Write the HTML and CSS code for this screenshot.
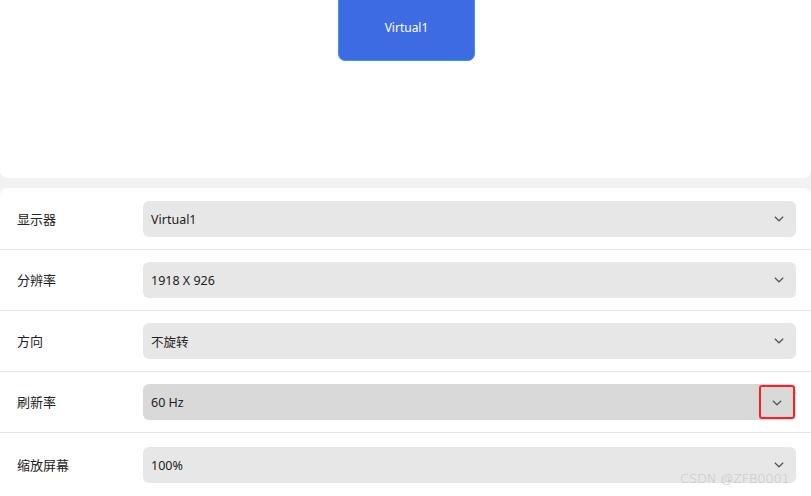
FILE: index.html
```html
<!DOCTYPE html>
<html lang="zh">
<head>
<meta charset="utf-8">
<title>显示器</title>
<link rel="stylesheet" href="styles.css">
</head>
<body>
<div class="page">
  <section class="canvas">
    <div class="monitor">Virtual1</div>
  </section>
  <section class="panel">
    <div class="row">
      <div class="label">显示器</div>
      <div class="select"><span>Virtual1</span><svg class="chev" width="10" height="6" viewBox="0 0 10 6"><path d="M0.8 0.8 L5 4.8 L9.2 0.8" fill="none" stroke="#555" stroke-width="1.2"/></svg></div>
    </div>
    <div class="row">
      <div class="label">分辨率</div>
      <div class="select"><span>1918 X 926</span><svg class="chev" width="10" height="6" viewBox="0 0 10 6"><path d="M0.8 0.8 L5 4.8 L9.2 0.8" fill="none" stroke="#555" stroke-width="1.2"/></svg></div>
    </div>
    <div class="row">
      <div class="label">方向</div>
      <div class="select"><span>不旋转</span><svg class="chev" width="10" height="6" viewBox="0 0 10 6"><path d="M0.8 0.8 L5 4.8 L9.2 0.8" fill="none" stroke="#555" stroke-width="1.2"/></svg></div>
    </div>
    <div class="row">
      <div class="label">刷新率</div>
      <div class="select select-active"><span>60 Hz</span><div class="highlight"><svg class="chev" width="10" height="6" viewBox="0 0 10 6"><path d="M0.8 0.8 L5 4.8 L9.2 0.8" fill="none" stroke="#555" stroke-width="1.2"/></svg></div></div>
    </div>
    <div class="row row-last">
      <div class="label">缩放屏幕</div>
      <div class="select"><span>100%</span><svg class="chev" width="10" height="6" viewBox="0 0 10 6"><path d="M0.8 0.8 L5 4.8 L9.2 0.8" fill="none" stroke="#555" stroke-width="1.2"/></svg></div>
    </div>
  </section>
  <div class="watermark">CSDN @ZFB0001</div>
</div>
</body>
</html>
```

FILE: styles.css
```css
* { box-sizing: border-box; }
html, body {
  margin: 0;
  padding: 0;
  background: #f2f2f2;
  font-family: "Noto Sans", "Noto Sans CJK SC", sans-serif;
  color: #222;
}
.page {
  position: relative;
  width: 811px;
  height: 496px;
  overflow: hidden;
}
.canvas {
  position: relative;
  height: 178px;
  background: #fff;
  border-radius: 0 0 8px 8px;
}
.monitor {
  position: absolute;
  left: 338px;
  top: -8px;
  width: 137px;
  height: 69px;
  background: #3d6be3;
  border: 1px solid #3a9bd6;
  border-radius: 7px;
  color: #fff;
  font-size: 12px;
  display: flex;
  align-items: center;
  justify-content: center;
  padding-top: 1px;
}
.panel {
  margin-top: 10px;
  padding-top: 1px;
  background: #fff;
  border-radius: 8px 8px 0 0;
  height: 308px;
}
.row {
  display: flex;
  align-items: center;
  padding: 12px 15px 12px 17px;
  border-bottom: 1px solid #e6e6e6;
}
.row-last {
  padding-top: 14px;
  border-bottom: none;
}
.label {
  width: 126px;
  font-size: 13px;
  line-height: 18px;
}
.select {
  flex: 1;
  height: 36px;
  background: #e7e7e7;
  border-radius: 6px;
  display: flex;
  align-items: center;
  justify-content: space-between;
  padding: 0 12px 0 8px;
  font-size: 12.5px;
}
.select-active {
  background: #d9d9d9;
  padding-right: 1px;
}
.chev { display: block; }
.highlight {
  width: 36px;
  height: 34px;
  border: 2px solid #ff1f1f;
  border-radius: 3px;
  display: flex;
  align-items: center;
  justify-content: center;
  padding-top: 1px;
}
.watermark {
  position: absolute;
  left: 680px;
  top: 471px;
  font-family: "DejaVu Sans", sans-serif;
  font-size: 13px;
  color: rgba(180, 180, 180, 0.7);
  letter-spacing: -0.2px;
  font-weight: 300;
}
```
